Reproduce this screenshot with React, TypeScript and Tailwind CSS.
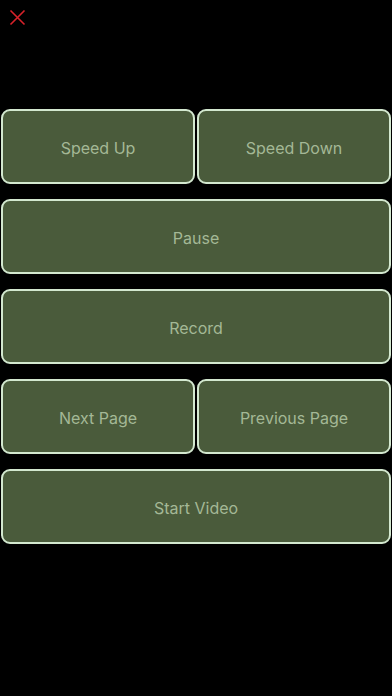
import React from "react";

const Btn = ({ label }: { label: string }) => (
  <button className="flex-1 h-[75px] rounded-[9px] border-2 border-[#d3e8cf] bg-[#4a5b3b] text-[#a4b896] text-[16px] pt-[2px] flex items-center justify-center">
    {label}
  </button>
);

export default function App() {
  return (
    <div
      className="w-[392px] h-[696px] bg-black relative"
      style={{ fontFamily: "Inter, 'Liberation Sans', sans-serif" }}
    >
      <div className="h-[109px] pt-[9px] pl-[9px]">
        <svg width="17" height="17" viewBox="0 0 17 17">
          <path d="M1.5 1.5 L15.5 15.5 M15.5 1.5 L1.5 15.5" stroke="#d8222a" strokeWidth="1.6" fill="none" />
        </svg>
      </div>
      <div className="flex flex-col gap-[15px] px-[1px]">
        <div className="flex gap-[2px]">
          <Btn label="Speed Up" />
          <Btn label="Speed Down" />
        </div>
        <div className="flex">
          <Btn label="Pause" />
        </div>
        <div className="flex">
          <Btn label="Record" />
        </div>
        <div className="flex gap-[2px]">
          <Btn label="Next Page" />
          <Btn label="Previous Page" />
        </div>
        <div className="flex">
          <Btn label="Start Video" />
        </div>
      </div>
    </div>
  );
}
